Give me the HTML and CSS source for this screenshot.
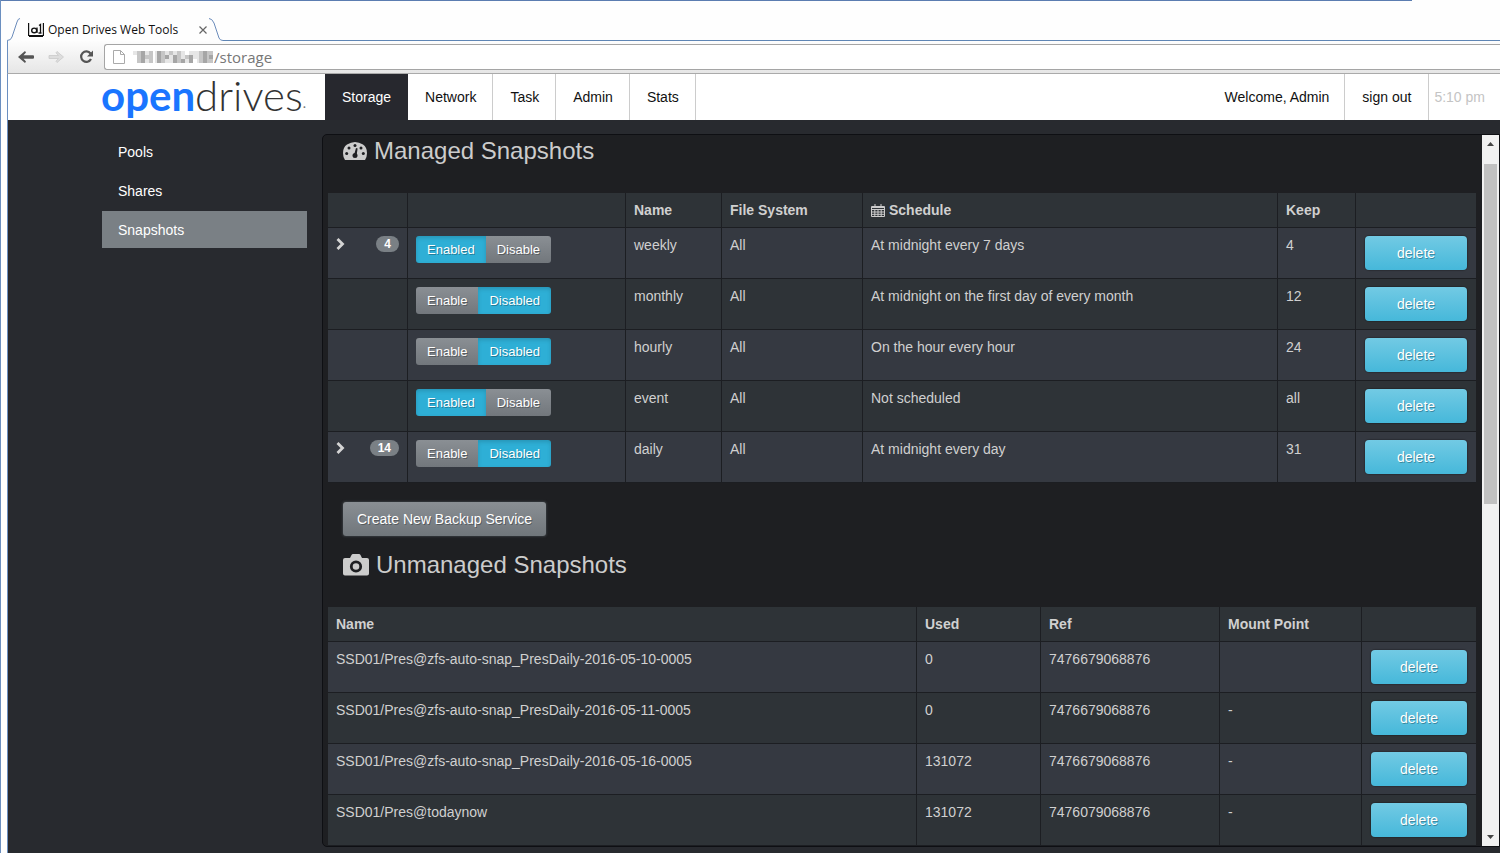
FILE: index.html
```
<!DOCTYPE html>
<html lang="en">
<head>
<meta charset="utf-8">
<title>Open Drives Web Tools</title>
<link rel="stylesheet" href="styles.css">
</head>
<body>
<div class="browser">
  <div class="top-edge"></div>
  <div class="tab-strip">
    <div class="tab">
      <svg class="tab-edge" width="14" height="23" viewBox="0 0 14 23"><path d="M0 22.5 Q4 22.5 5 19 L10 4 Q11 .5 14 .5 V23 H0Z" fill="#fdfdfd"/><path d="M0 22.5 Q4 22.5 5 19 L10 4 Q11 .5 13 .5" fill="none" stroke="#6a8bbb"/></svg>
      <svg class="favicon" width="16" height="14" viewBox="0 0 16 14" fill="none" stroke="#111"><path d="M.6 0 V12.500 H15.400 V0" stroke-width="1.200"/><path d="M1 13 H15" stroke-width="2"/><path d="M9 4.500 V10 M11 2.500 L12.500 1.500 V10 M10.500 10 H13.500" stroke-width="1.300"/><ellipse cx="6.200" cy="7.400" rx="2.500" ry="2.300" stroke-width="1.400"/></svg>
      <span class="tab-title">Open Drives Web Tools</span>
      <button class="tab-close" aria-label="Close tab"><svg width="8" height="8" viewBox="0 0 8 8"><path d="M.5 .5 L7.500 7.500 M7.500 .5 L.5 7.500" stroke="#666" stroke-width="1.200"/></svg></button>
      <svg class="tab-edge" width="14" height="23" viewBox="0 0 14 23"><path d="M14 22.5 Q11 22.5 10 20 L5 5 Q3 .5 0 .5 V23 H14Z" fill="#fdfdfd"/><path d="M14 22.5 Q11 22.5 10 20 L5 5 Q3 .5 0 .5" fill="none" stroke="#6a8bbb"/></svg>
    </div>
    <div class="strip-rest"></div>
  </div>
  <div class="toolbar">
    <button class="tool" aria-label="Back"><svg width="16" height="12" viewBox="0 0 16 12"><path d="M0 6 L7 0 L8 1.5 L5.5 4.3 H15 Q16 4.3 16 5.2 V6.8 Q16 7.7 15 7.7 H5.5 L8 10.5 L7 12Z" fill="#555"/></svg></button>
    <button class="tool" aria-label="Forward"><svg width="16" height="12" viewBox="0 0 16 12"><path d="M15.500 6 L9 .5 L8 1.800 L10.500 4.500 H1 V7.500 H10.500 L8 10.200 L9 11.500Z" fill="#ddd" stroke="#c9c9c9" stroke-width=".8"/></svg></button>
    <button class="tool" aria-label="Reload"><svg width="15" height="14" viewBox="0 0 15 14"><path d="M11.500 3.500 A5.200 5.200 0 1 0 12 9" fill="none" stroke="#555" stroke-width="2.200"/><path d="M14 .5 V6.500 H8Z" fill="#555"/></svg></button>
    <div class="address">
      <svg width="12" height="14" viewBox="0 0 12 14"><path d="M.5 .5 H7.500 L11.500 4.500 V13.500 H.5Z M7.500 .5 V4.500 H11.500" fill="#fff" stroke="#aaa"/></svg>
      <svg class="mosaic" width="81" height="12" viewBox="0 0 81 12" shape-rendering="crispEdges">
        <path fill="#e6e6e6" d="M0 0H20V12H4V4H0Z M22 0H52V12H22Z M52 8H60V12H52Z M56 0H80V12H64V8H56Z"/>
        <path fill="#c6c6c6" d="M4 0H8V12H4Z M12 4H16V8H12Z M16 0H20V12H16Z M28 0H32V12H28Z M36 0H40V4H36Z M44 0H48V12H44Z M52 4H56V8H52Z M66 0H70V12H66Z M74 0H80V12H74Z"/>
        <path fill="#a6a6a6" d="M8 0H12V12H8Z M24 0H28V12H24Z M32 4H36V8H32Z M40 4H44V12H40Z M48 8H52V12H48Z M56 4H60V12H56Z M70 0H74V12H70Z M76 4H80V8H76Z"/>
      </svg>
      <input class="url" aria-label="Address" value="/storage">
    </div>
  </div>

  <div class="page">
    <header class="navbar">
      <a class="logo" href="#"><span class="logo-open">open</span><span class="logo-drives">drives</span><span class="logo-dot">.</span></a>
      <nav class="menu">
        <a class="active" href="#">Storage</a><a href="#">Network</a><a href="#">Task</a><a href="#">Admin</a><a href="#">Stats</a>
      </nav>
      <div class="account">
        <span class="welcome">Welcome, Admin</span>
        <a class="signout" href="#">sign out</a>
        <span class="clock">5:10 pm</span>
      </div>
    </header>

    <div class="body">
      <nav class="sidebar">
        <a href="#">Pools</a><a href="#">Shares</a><a class="active" href="#">Snapshots</a>
      </nav>
      <div class="panel">
        <main class="content">
          <h2 class="title"><svg width="24" height="18" viewBox="0 0 24 18"><path d="M2 18 Q0 15 0 11 Q0 5 4 2.500 Q8 0 12 0 Q16 0 20 2.500 Q24 5 24 11 Q24 15 22 18Z" fill="#ccc"/><g fill="#1e1f22"><circle cx="3.700" cy="11.500" r="1.500"/><circle cx="6" cy="6" r="1.500"/><circle cx="12" cy="3.400" r="1.500"/><circle cx="18" cy="6" r="1.500"/><circle cx="20.300" cy="11.500" r="1.500"/><circle cx="12" cy="13.500" r="2.500"/><path d="M11 13 L13 6 L14.600 6.500 L13.500 14Z"/></g></svg>Managed Snapshots</h2>
          <table class="grid managed">
            <colgroup><col class="c-expand"><col class="c-toggle"><col class="c-name"><col class="c-fs"><col><col class="c-keep"><col class="c-action"></colgroup>
            <thead><tr><th></th><th></th><th>Name</th><th>File System</th><th><svg class="cal" width="14" height="13" viewBox="0 0 14 13"><path d="M.5 2.500 H13.500 V12.500 H.5Z M.5 5.500 H13.500 M.5 8 H13.500 M.5 10.300 H13.500 M3.800 5 V12.500 M7 5 V12.500 M10.200 5 V12.500 M4 0 V4 M10 0 V4 M.5 3.500 H13.500" fill="none" stroke="#ccc"/></svg>Schedule</th><th>Keep</th><th></th></tr></thead>
            <tbody>
              <tr><td><div class="expand"><button class="chevron" aria-label="Expand"><svg width="9" height="12" viewBox="0 0 9 12"><path d="M1.500 1 L6.500 6 L1.500 11" fill="none" stroke="#d4d4d4" stroke-width="2.800"/></svg></button><span class="badge">4</span></div></td><td><div class="toggle"><button class="on">Enabled</button><button>Disable</button></div></td><td>weekly</td><td>All</td><td>At midnight every 7 days</td><td>4</td><td><button class="delete">delete</button></td></tr>
              <tr><td></td><td><div class="toggle"><button>Enable</button><button class="on">Disabled</button></div></td><td>monthly</td><td>All</td><td>At midnight on the first day of every month</td><td>12</td><td><button class="delete">delete</button></td></tr>
              <tr><td></td><td><div class="toggle"><button>Enable</button><button class="on">Disabled</button></div></td><td>hourly</td><td>All</td><td>On the hour every hour</td><td>24</td><td><button class="delete">delete</button></td></tr>
              <tr><td></td><td><div class="toggle"><button class="on">Enabled</button><button>Disable</button></div></td><td>event</td><td>All</td><td>Not scheduled</td><td>all</td><td><button class="delete">delete</button></td></tr>
              <tr><td><div class="expand"><button class="chevron" aria-label="Expand"><svg width="9" height="12" viewBox="0 0 9 12"><path d="M1.500 1 L6.500 6 L1.500 11" fill="none" stroke="#d4d4d4" stroke-width="2.800"/></svg></button><span class="badge">14</span></div></td><td><div class="toggle"><button>Enable</button><button class="on">Disabled</button></div></td><td>daily</td><td>All</td><td>At midnight every day</td><td>31</td><td><button class="delete">delete</button></td></tr>
            </tbody>
          </table>
          <button class="create">Create New Backup Service</button>
          <h2 class="title"><svg width="26" height="22" viewBox="0 0 26 22"><path d="M2 4 H7 L8.500 1 Q9 0 10 0 H16 Q17 0 17.500 1 L19 4 H24 Q26 4 26 6 V19.500 Q26 21.500 24 21.500 H2 Q0 21.500 0 19.500 V6 Q0 4 2 4Z" fill="#ccc"/><circle cx="13" cy="12.500" r="4.700" fill="none" stroke="#1e1f22" stroke-width="2.800"/></svg>Unmanaged Snapshots</h2>
          <table class="grid">
            <colgroup><col><col class="c-used"><col class="c-ref"><col class="c-mount"><col class="c-action2"></colgroup>
            <thead><tr><th>Name</th><th>Used</th><th>Ref</th><th>Mount Point</th><th></th></tr></thead>
            <tbody>
              <tr><td>SSD01/Pres@zfs-auto-snap_PresDaily-2016-05-10-0005</td><td>0</td><td>7476679068876</td><td></td><td><button class="delete">delete</button></td></tr>
              <tr><td>SSD01/Pres@zfs-auto-snap_PresDaily-2016-05-11-0005</td><td>0</td><td>7476679068876</td><td>-</td><td><button class="delete">delete</button></td></tr>
              <tr><td>SSD01/Pres@zfs-auto-snap_PresDaily-2016-05-16-0005</td><td>131072</td><td>7476679068876</td><td>-</td><td><button class="delete">delete</button></td></tr>
              <tr><td>SSD01/Pres@todaynow</td><td>131072</td><td>7476079068876</td><td>-</td><td><button class="delete">delete</button></td></tr>
            </tbody>
          </table>
        </main>
        <div class="scrollbar"><svg width="7" height="4" viewBox="0 0 7 4"><path d="M0 4 L3.500 0 L7 4Z" fill="#444"/></svg><div class="track"><div class="thumb"></div></div><svg width="7" height="4" viewBox="0 0 7 4"><path d="M0 0 L3.500 4 L7 0Z" fill="#444"/></svg></div>
      </div>
    </div>
  </div>
</div>
</body>
</html>
```
FILE: styles.css
```
* { box-sizing: border-box; }
body { margin: 0; font: 14px/18px "Liberation Sans", Arial, sans-serif; color: #d0d0d0; background: #fefefe; }
button { font: inherit; color: inherit; border: 0; padding: 0; margin: 0; background: none; white-space: nowrap; }
a { color: inherit; text-decoration: none; }
svg { display: block; flex: none; }

.browser { height: 100vh; display: flex; flex-direction: column; overflow: hidden; padding-left: 6px; border-left: 1px solid #6b8fc0; }
.top-edge { height: 1px; background: #5b7db1; margin: 0 88px 0 -6px; flex: none; }

.tab-strip { display: flex; height: 40px; padding-top: 17px; flex: none; }
.tab { display: flex; align-items: center; color: #111; font: 12px/16px "Open Sans", sans-serif; }
.tab-title { margin-left: 4px; width: 148px; white-space: nowrap; }
.favicon { margin-left: 7px; }
.tab-close { width: 13px; height: 13px; display: grid; place-items: center; }
.strip-rest { flex: 1; border-bottom: 1px solid #5f86b5; }

.toolbar { display: flex; align-items: center; height: 33px; flex: none; padding-left: 10px; border-left: 1px solid #6b8fc0; border-bottom: 1px solid #aaa; background: linear-gradient(#fdfdfd, #e6e6e6); }
.tool { width: 16px; height: 16px; margin-right: 14px; display: grid; place-items: center; }
.address { flex: 1; display: flex; align-items: center; height: 26px; margin-left: -4px; padding-left: 8px; background: #fff; border: 1px solid #a5a5a5; border-right: 0; border-radius: 3px 0 0 3px; }
.mosaic { margin-left: 8px; }
.url { flex: 1; border: 0; padding: 0; background: none; outline: 0; color: #777; font: 15px/20px "Open Sans", sans-serif; }

.page { flex: 1; min-height: 0; display: flex; flex-direction: column; border-left: 1px solid #6b8fc0; background: #282a2f; }
.navbar { display: flex; height: 46px; flex: none; background: #fff; color: #111; }
.logo { display: flex; width: 317px; padding-left: 93px; font: 42px/42px Lato, sans-serif; }
.logo-open { font-weight: 700; color: #1a75ff; }
.logo-drives { font-weight: 300; color: #333; }
.logo-dot { font-size: 14px; line-height: 58px; color: #777; }
.menu { display: flex; }
.menu a { padding: 14px 16px 14px 17px; border-right: 1px solid #ccc; }
.menu .active { background: #27282e; color: #fff; border-color: #27282e; }
.account { display: flex; margin-left: auto; }
.account > * { padding: 14px 15px; }
.account .signout { border: solid #ccc; border-width: 0 1px; padding: 14px 17px; }
.account .clock { color: #c4c4c4; padding: 14px 15px 14px 5px; }

.body { flex: 1; min-height: 0; display: flex; padding: 13px 0 6px 94px; }
.sidebar { width: 205px; margin-right: 15px; display: flex; flex-direction: column; gap: 2px; color: #fff; }
.sidebar a { padding: 10px 16px 9px; }
.sidebar .active { background: #7a8085; }

.panel { flex: 1; min-width: 0; display: flex; margin-top: 1px; border: 1px solid #0e0f13; border-radius: 5px 0 0 5px; background: #1e1f22; overflow: hidden; }
.content { flex: 1; min-width: 0; padding: 0 6px 0 5px; }
.title { display: flex; align-items: center; gap: 7px; margin: 0; padding: 1px 0 27px 15px; font-size: 24px; line-height: 30px; font-weight: 400; color: #ccc; }

.grid { width: 100%; table-layout: fixed; border-collapse: separate; border-spacing: 0; }
.grid th, .grid td { text-align: left; vertical-align: top; padding: 8px; border-right: 1px solid #1c1e22; border-bottom: 1px solid #1c1e22; white-space: nowrap; }
.grid th { height: 35px; background: #2e3337; }
.grid td { height: 51px; background: #2e3337; }
.grid tr > :last-child { border-right: 0; padding: 8px 9px; }
.grid tbody tr:nth-child(odd) td { background: #353941; }
.c-expand { width: 80px; } .c-toggle { width: 218px; } .c-name { width: 96px; } .c-fs { width: 141px; } .c-keep { width: 78px; } .c-action { width: 120px; }
.c-used { width: 124px; } .c-ref { width: 179px; } .c-mount { width: 142px; } .c-action2 { width: 114px; }
.cal { display: inline-block; vertical-align: -2px; margin-right: 4px; }

.expand { display: flex; justify-content: space-between; align-items: center; height: 16px; }
.badge { padding: 0 8px; border-radius: 8px; background: #7a8085; color: #fff; font-size: 12px; line-height: 16px; font-weight: 700; }
.toggle { display: flex; }
.toggle button { padding: 0 11px; height: 27px; font-size: 13px; color: #fff; background: linear-gradient(#8a8f94, #72777c); text-shadow: 1px 1px 0 rgba(0,0,0,.3); }
.toggle button:first-child { border-radius: 3px 0 0 3px; }
.toggle button:last-child { border-radius: 0 3px 3px 0; }
.toggle .on { background: #2eafd6; box-shadow: inset 0 2px 4px rgba(0,0,0,.15); }
.delete { display: block; width: 100%; height: 34px; border-radius: 4px; color: #fff; background: linear-gradient(#72cae4, #46b8da); box-shadow: 0 0 1px 1px rgba(0,0,0,.2); text-shadow: 1px 1px 0 rgba(0,0,0,.3); }
.create { display: block; height: 34px; margin: 19px 0 13px 15px; padding: 0 14px; border-radius: 3px; color: #fff; background: linear-gradient(#8a8f94, #70767b); box-shadow: 0 0 2px 1px #34383c; text-shadow: 1px 1px 0 rgba(0,0,0,.3); }

.scrollbar { width: 17px; display: flex; flex-direction: column; align-items: center; padding: 7px 0; background: #f1f1f1; }
.track { flex: 1; align-self: stretch; padding: 18px 2px; }
.thumb { height: 52%; background: #c1c1c1; }
```
